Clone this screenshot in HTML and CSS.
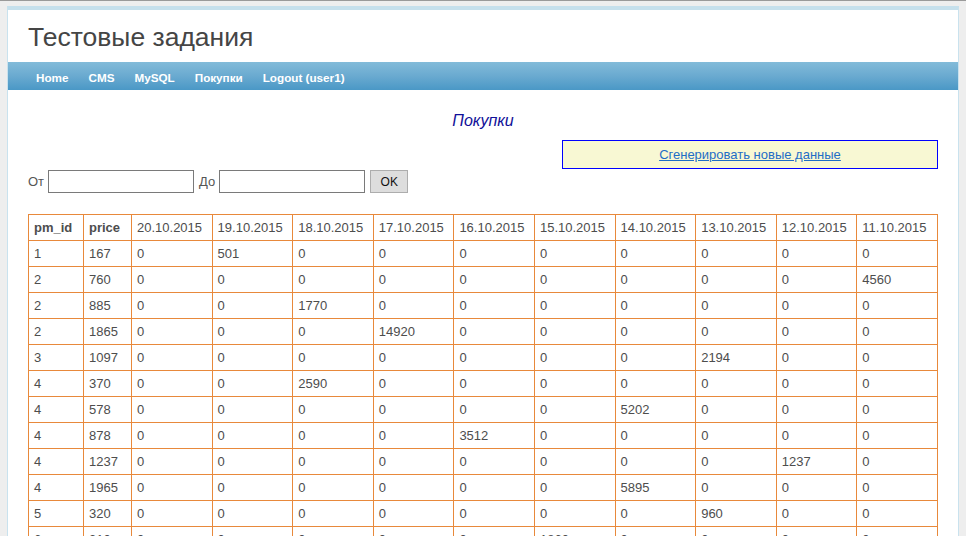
FILE: index.html
```html
<!DOCTYPE html>
<html lang="ru">
<head>
<meta charset="utf-8">
<title>Тестовые задания</title>
<link rel="stylesheet" href="styles.css">
</head>
<body>
<div class="page">
  <header class="header">
    <h1 class="site-title">Тестовые задания</h1>
  </header>
  <nav class="nav">
    <a href="#">Home</a>
    <a href="#">CMS</a>
    <a href="#">MySQL</a>
    <a href="#">Покупки</a>
    <a href="#">Logout (user1)</a>
  </nav>
  <main class="content">
    <h2 class="page-title">Покупки</h2>
    <div class="gen-box"><a href="#">Сгенерировать новые данные</a></div>
    <form class="filter">
      <label class="lbl">От</label><input class="inp" type="text">
      <label class="lbl">До</label><input class="inp" type="text">
      <button class="btn" type="button">OK</button>
    </form>
    <table class="grid">
      <colgroup><col class="c-id"><col class="c-price"><col><col><col><col><col><col><col><col><col><col></colgroup>
      <thead>
        <tr><th class="b">pm_id</th><th class="b">price</th><th>20.10.2015</th><th>19.10.2015</th><th>18.10.2015</th><th>17.10.2015</th><th>16.10.2015</th><th>15.10.2015</th><th>14.10.2015</th><th>13.10.2015</th><th>12.10.2015</th><th>11.10.2015</th></tr>
      </thead>
      <tbody>
        <tr><td>1</td><td>167</td><td>0</td><td>501</td><td>0</td><td>0</td><td>0</td><td>0</td><td>0</td><td>0</td><td>0</td><td>0</td></tr>
        <tr><td>2</td><td>760</td><td>0</td><td>0</td><td>0</td><td>0</td><td>0</td><td>0</td><td>0</td><td>0</td><td>0</td><td>4560</td></tr>
        <tr><td>2</td><td>885</td><td>0</td><td>0</td><td>1770</td><td>0</td><td>0</td><td>0</td><td>0</td><td>0</td><td>0</td><td>0</td></tr>
        <tr><td>2</td><td>1865</td><td>0</td><td>0</td><td>0</td><td>14920</td><td>0</td><td>0</td><td>0</td><td>0</td><td>0</td><td>0</td></tr>
        <tr><td>3</td><td>1097</td><td>0</td><td>0</td><td>0</td><td>0</td><td>0</td><td>0</td><td>0</td><td>2194</td><td>0</td><td>0</td></tr>
        <tr><td>4</td><td>370</td><td>0</td><td>0</td><td>2590</td><td>0</td><td>0</td><td>0</td><td>0</td><td>0</td><td>0</td><td>0</td></tr>
        <tr><td>4</td><td>578</td><td>0</td><td>0</td><td>0</td><td>0</td><td>0</td><td>0</td><td>5202</td><td>0</td><td>0</td><td>0</td></tr>
        <tr><td>4</td><td>878</td><td>0</td><td>0</td><td>0</td><td>0</td><td>3512</td><td>0</td><td>0</td><td>0</td><td>0</td><td>0</td></tr>
        <tr><td>4</td><td>1237</td><td>0</td><td>0</td><td>0</td><td>0</td><td>0</td><td>0</td><td>0</td><td>0</td><td>1237</td><td>0</td></tr>
        <tr><td>4</td><td>1965</td><td>0</td><td>0</td><td>0</td><td>0</td><td>0</td><td>0</td><td>5895</td><td>0</td><td>0</td><td>0</td></tr>
        <tr><td>5</td><td>320</td><td>0</td><td>0</td><td>0</td><td>0</td><td>0</td><td>0</td><td>0</td><td>960</td><td>0</td><td>0</td></tr>
        <tr><td>6</td><td>310</td><td>0</td><td>0</td><td>0</td><td>0</td><td>0</td><td>1860</td><td>0</td><td>0</td><td>0</td><td>0</td></tr>
      </tbody>
    </table>
  </main>
</div>
</body>
</html>
```

FILE: styles.css
```css
html {
  overflow: hidden;
}

body {
  margin: 0;
  padding: 0 7px;
  background: #eeeeee;
  border-top: 1px solid #9a9a9a;
  font-family: "Liberation Sans", Arial, sans-serif;
  font-size: 13px;
  color: #4d4d4d;
}

.page {
  margin-top: 5px;
  background: #ffffff;
  border: 1px solid #c9e2ee;
  border-top: 4px solid #c6e0ec;
  min-height: 600px;
}

.header {
  height: 52px;
  box-sizing: border-box;
  padding: 11px 0 0 20px;
}

.site-title {
  margin: 0;
  font-size: 26.5px;
  line-height: 32px;
  font-weight: normal;
  color: #454545;
}

.nav {
  display: flex;
  height: 28px;
  box-sizing: border-box;
  padding: 4px 0 0 18px;
  background: linear-gradient(to bottom, #82bbd9 0%, #6aaad0 50%, #4a98c6 100%);
}

.nav a {
  padding: 0 10px;
  line-height: 24px;
  font-size: 11.7px;
  font-weight: bold;
  color: #ffffff;
  text-decoration: none;
}

.content {
  padding: 21px 20px 0 20px;
}

.page-title {
  margin: 0 0 9px 0;
  text-align: center;
  font-size: 16px;
  line-height: 20px;
  font-style: italic;
  font-weight: normal;
  color: #101098;
}

.gen-box {
  width: 374px;
  margin-left: auto;
  height: 27px;
  box-sizing: content-box;
  border: 1px solid #0000ff;
  background: #f8f8d3;
  text-align: center;
  line-height: 28px;
  font-size: 13px;
}

.gen-box a {
  color: #1f6dc6;
  text-decoration: underline;
}

.filter {
  display: flex;
  align-items: center;
  margin: 1px 0 21px 0;
  height: 23px;
}

.lbl {
  margin-right: 4px;
  color: #555555;
  font-size: 13px;
}

.inp {
  width: 146px;
  height: 23px;
  box-sizing: border-box;
  margin: 0 5px 0 0;
  padding: 0 3px;
  border: 1px solid #7a7a7a;
  background: #ffffff;
  font-family: inherit;
  font-size: 13px;
}

.btn {
  width: 38px;
  height: 23px;
  box-sizing: border-box;
  margin: 0;
  padding: 0;
  border: 1px solid #adadad;
  background: #dddddd;
  color: #111111;
  font-family: inherit;
  font-size: 12px;
}

.grid {
  width: 100%;
  table-layout: fixed;
  border-collapse: collapse;
  font-size: 13px;
  color: #4d4d4d;
}

.grid .c-id {
  width: 55px;
}

.grid .c-price {
  width: 48px;
}

.grid th,
.grid td {
  padding: 5px 5px;
  border: 1px solid #e8893b;
  text-align: left;
  font-weight: normal;
  line-height: 15px;
  white-space: nowrap;
}

.grid th.b {
  font-weight: bold;
}
```
